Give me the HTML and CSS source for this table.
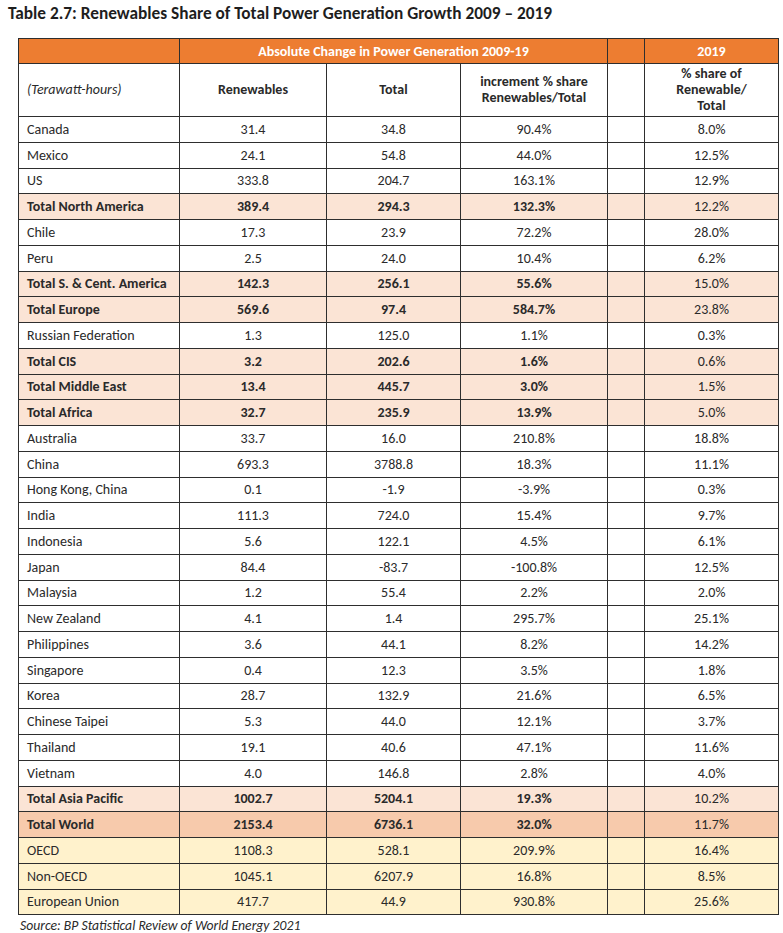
FILE: index.html
```html
<!DOCTYPE html>
<html>
<head>
<meta charset="utf-8">
<link rel="stylesheet" href="styles.css">
</head>
<body>
<h1 class="title">Table 2.7: Renewables Share of Total Power Generation Growth 2009 – 2019</h1>
<table class="data">
  <colgroup>
    <col class="c-name"><col class="c-ren"><col class="c-tot"><col class="c-inc"><col class="c-gap"><col class="c-share">
  </colgroup>
  <thead>
    <tr class="h1">
      <th></th>
      <th colspan="3">Absolute Change in Power Generation 2009-19</th>
      <th></th>
      <th>2019</th>
    </tr>
    <tr class="h2">
      <th class="unit">(Terawatt-hours)</th>
      <th>Renewables</th>
      <th>Total</th>
      <th>increment % share<br>Renewables/Total</th>
      <th></th>
      <th>% share of<br>Renewable/<br>Total</th>
    </tr>
  </thead>
  <tbody>
    <tr><td>Canada</td><td>31.4</td><td>34.8</td><td>90.4%</td><td></td><td>8.0%</td></tr>
    <tr><td>Mexico</td><td>24.1</td><td>54.8</td><td>44.0%</td><td></td><td>12.5%</td></tr>
    <tr><td>US</td><td>333.8</td><td>204.7</td><td>163.1%</td><td></td><td>12.9%</td></tr>
    <tr class="sub"><td>Total North America</td><td>389.4</td><td>294.3</td><td>132.3%</td><td></td><td>12.2%</td></tr>
    <tr><td>Chile</td><td>17.3</td><td>23.9</td><td>72.2%</td><td></td><td>28.0%</td></tr>
    <tr><td>Peru</td><td>2.5</td><td>24.0</td><td>10.4%</td><td></td><td>6.2%</td></tr>
    <tr class="sub"><td>Total S. &amp; Cent. America</td><td>142.3</td><td>256.1</td><td>55.6%</td><td></td><td>15.0%</td></tr>
    <tr class="sub"><td>Total Europe</td><td>569.6</td><td>97.4</td><td>584.7%</td><td></td><td>23.8%</td></tr>
    <tr><td>Russian Federation</td><td>1.3</td><td>125.0</td><td>1.1%</td><td></td><td>0.3%</td></tr>
    <tr class="sub"><td>Total CIS</td><td>3.2</td><td>202.6</td><td>1.6%</td><td></td><td>0.6%</td></tr>
    <tr class="sub"><td>Total Middle East</td><td>13.4</td><td>445.7</td><td>3.0%</td><td></td><td>1.5%</td></tr>
    <tr class="sub"><td>Total Africa</td><td>32.7</td><td>235.9</td><td>13.9%</td><td></td><td>5.0%</td></tr>
    <tr><td>Australia</td><td>33.7</td><td>16.0</td><td>210.8%</td><td></td><td>18.8%</td></tr>
    <tr><td>China</td><td>693.3</td><td>3788.8</td><td>18.3%</td><td></td><td>11.1%</td></tr>
    <tr><td>Hong Kong, China</td><td>0.1</td><td>-1.9</td><td>-3.9%</td><td></td><td>0.3%</td></tr>
    <tr><td>India</td><td>111.3</td><td>724.0</td><td>15.4%</td><td></td><td>9.7%</td></tr>
    <tr><td>Indonesia</td><td>5.6</td><td>122.1</td><td>4.5%</td><td></td><td>6.1%</td></tr>
    <tr><td>Japan</td><td>84.4</td><td>-83.7</td><td>-100.8%</td><td></td><td>12.5%</td></tr>
    <tr><td>Malaysia</td><td>1.2</td><td>55.4</td><td>2.2%</td><td></td><td>2.0%</td></tr>
    <tr><td>New Zealand</td><td>4.1</td><td>1.4</td><td>295.7%</td><td></td><td>25.1%</td></tr>
    <tr><td>Philippines</td><td>3.6</td><td>44.1</td><td>8.2%</td><td></td><td>14.2%</td></tr>
    <tr><td>Singapore</td><td>0.4</td><td>12.3</td><td>3.5%</td><td></td><td>1.8%</td></tr>
    <tr><td>Korea</td><td>28.7</td><td>132.9</td><td>21.6%</td><td></td><td>6.5%</td></tr>
    <tr><td>Chinese Taipei</td><td>5.3</td><td>44.0</td><td>12.1%</td><td></td><td>3.7%</td></tr>
    <tr><td>Thailand</td><td>19.1</td><td>40.6</td><td>47.1%</td><td></td><td>11.6%</td></tr>
    <tr><td>Vietnam</td><td>4.0</td><td>146.8</td><td>2.8%</td><td></td><td>4.0%</td></tr>
    <tr class="sub"><td>Total Asia Pacific</td><td>1002.7</td><td>5204.1</td><td>19.3%</td><td></td><td>10.2%</td></tr>
    <tr class="world"><td>Total World</td><td>2153.4</td><td>6736.1</td><td>32.0%</td><td></td><td>11.7%</td></tr>
    <tr class="group"><td>OECD</td><td>1108.3</td><td>528.1</td><td>209.9%</td><td></td><td>16.4%</td></tr>
    <tr class="group"><td>Non-OECD</td><td>1045.1</td><td>6207.9</td><td>16.8%</td><td></td><td>8.5%</td></tr>
    <tr class="group"><td>European Union</td><td>417.7</td><td>44.9</td><td>930.8%</td><td></td><td>25.6%</td></tr>
  </tbody>
</table>
<p class="source">Source: BP Statistical Review of World Energy 2021</p>
</body>
</html>
```
FILE: styles.css
```css
html, body {
  margin: 0;
  padding: 0;
  background: #ffffff;
}
body {
  font-family: Carlito, Calibri, Lato, "Liberation Sans", sans-serif;
  color: #2a2a2a;
}
.title {
  margin: 0;
  padding: 3px 0 0 8px;
  height: 38px;
  box-sizing: border-box;
  font-size: 17.3px;
  font-weight: bold;
  color: #1e1e1e;
  letter-spacing: 0;
}
.data {
  margin-left: 18px;
  width: 760px;
  border-collapse: collapse;
  table-layout: fixed;
  font-size: 14px;
}
.c-name { width: 161px; }
.c-ren { width: 147px; }
.c-tot { width: 134px; }
.c-inc { width: 147px; }
.c-gap { width: 37px; }
.c-share { width: 134px; }
.data th, .data td {
  border: 1px solid #2e2e2e;
  padding: 0;
  text-align: center;
  vertical-align: middle;
}
.data td:first-child {
  text-align: left;
  padding-left: 8px;
}
.h1 th {
  background: #ed7d31;
  color: #ffffff;
  font-weight: bold;
  height: 24px;
}
.h2 th {
  height: 52px;
  font-weight: bold;
  line-height: 16px;
}
.h2 th.unit {
  font-weight: normal;
  font-style: italic;
  text-align: left;
  padding-left: 8px;
}
.data tbody tr {
  height: 25.75px;
}
.data tbody td {
  line-height: 15px;
}
.sub td, .world td {
  font-weight: bold;
}
.sub td:last-child, .world td:last-child {
  font-weight: normal;
}
.sub td {
  background: #fbe4d5;
}
.world td {
  background: #f7caac;
}
.group td {
  background: #fff2cc;
}
.source {
  margin: 2px 0 0 20px;
  font-size: 13.7px;
  font-style: italic;
  color: #2a2a2a;
}
```
